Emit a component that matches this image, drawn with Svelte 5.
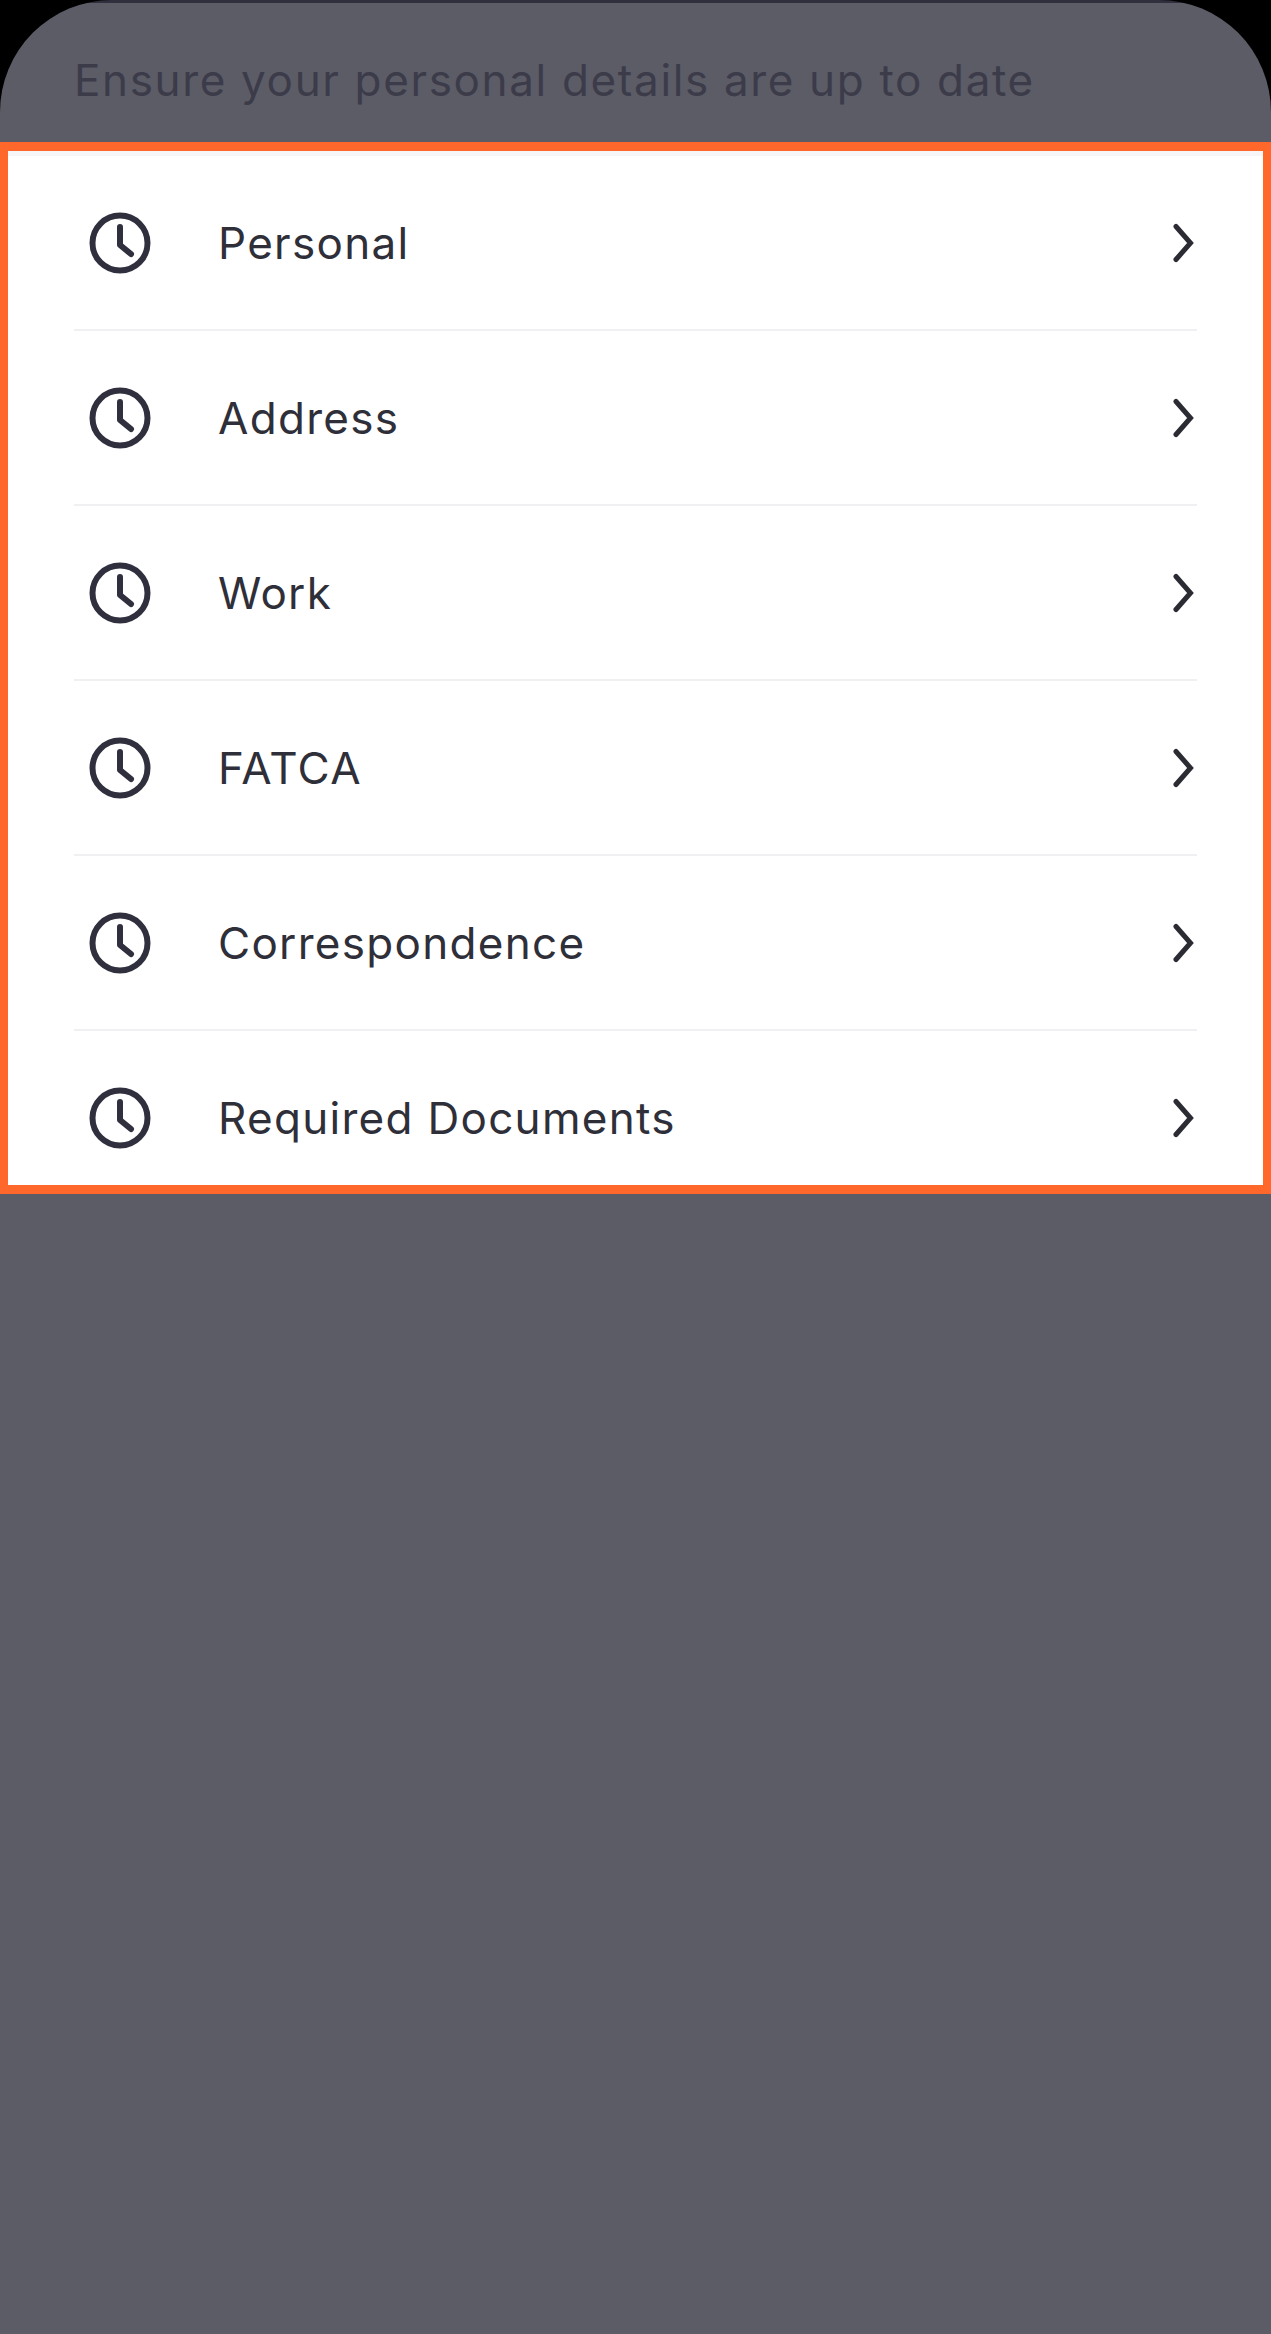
<script>
	const sections = ['Personal', 'Address', 'Work', 'FATCA', 'Correspondence', 'Required Documents'];
</script>

<main class="sheet">
	<header class="intro">
		<p>Ensure your personal details are up to date</p>
	</header>
	<section class="panel">
		<ul>
			{#each sections as name}
				<li>
					<svg class="clock" viewBox="0 0 62 62" aria-hidden="true">
						<circle cx="31" cy="31" r="27.5" />
						<path d="M31 15V33L42 42" />
					</svg>
					<span class="name">{name}</span>
					<svg class="chevron" viewBox="0 0 24 40" aria-hidden="true">
						<path d="M3 3.500L17.500 20L3 36.500" />
					</svg>
				</li>
			{/each}
		</ul>
	</section>
</main>

<style>
	:global(body) {
		margin: 0;
		background: #000;
	}

	.sheet {
		height: 2334px;
		border-radius: 112px 112px 0 0;
		background: linear-gradient(#2f2f3e 3px, #5c5c66 3px);
		font-family: Inter, 'Liberation Sans', sans-serif;
		overflow: hidden;
	}

	.intro {
		height: 142px;
		box-sizing: border-box;
		padding: 18px 74px 0;
		display: flex;
		align-items: center;
	}

	.intro p {
		margin: 0;
		font-size: 44px;
		letter-spacing: 1.65px;
		color: #3b3b4a;
	}

	.panel {
		height: 1052px;
		box-sizing: border-box;
		border: 9px solid #ff672b;
		border-width: 9px 8px;
		background: #fff;
		overflow: hidden;
	}

	ul {
		margin: 0;
		padding: 0;
		list-style: none;
		border-top: 5px solid #f6f6f8;
	}

	li {
		height: 175px;
		box-sizing: border-box;
		margin: 0 66px;
		display: flex;
		align-items: center;
		border-bottom: 2px solid #f0f0f2;
	}

	.clock {
		width: 62px;
		height: 62px;
		margin-left: 15px;
		flex: none;
	}

	.clock circle,
	.clock path,
	.chevron path {
		fill: none;
		stroke: #2f2f3e;
		stroke-width: 6;
		stroke-linecap: round;
		stroke-linejoin: round;
	}

	.chevron path {
		stroke: #2b2b33;
		stroke-width: 5;
		stroke-linejoin: miter;
	}

	.name {
		margin-left: 67px;
		flex: 1;
		font-size: 44px;
		letter-spacing: 1.3px;
		color: #2f2f3a;
	}

	.chevron {
		width: 24px;
		height: 40px;
		flex: none;
	}
</style>
